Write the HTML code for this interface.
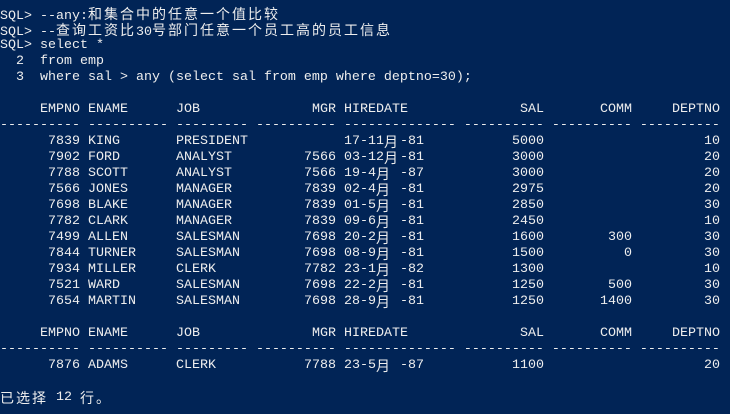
<!DOCTYPE html>
<html><head><meta charset="utf-8"><style>
html,body{margin:0;padding:0}
body{width:730px;height:414px;overflow:hidden;background:#012456;color:#eeeeee;font-family:"Liberation Mono","DejaVu Sans Mono","Courier New",monospace;font-size:13.33px;position:relative}
.l{position:absolute;left:0;height:16px;line-height:16px;white-space:pre}
.l span{position:absolute;top:0;white-space:pre;height:16px;line-height:16px}
.e{left:0;width:80px;text-align:right}
.n{left:88px}.j{left:176px}
.m{left:256px;width:80px;text-align:right}
.h{left:344px}
.s{left:464px;width:80px;text-align:right}
.c{left:552px;width:80px;text-align:right}
.d{left:640px;width:80px;text-align:right}
.k,i{font-style:normal;font-family:"Noto Sans CJK SC",sans-serif;font-size:14px;letter-spacing:2px}
.a{left:344px}.b{left:376px}.r{left:392px}
.a2{left:344px}.b2{left:384px}.r2{left:400px}
</style></head><body>
<div class="l" style="top:6px">SQL&gt; --any:<i>和集合中的任意一个值比较</i></div>
<div class="l" style="top:22px">SQL&gt; --<i>查询工资比</i>30<i>号部门任意一个员工高的员工信息</i></div>
<div class="l" style="top:38px">SQL&gt; select *</div>
<div class="l" style="top:54px">  2  from emp</div>
<div class="l" style="top:70px">  3  where sal &gt; any (select sal from emp where deptno=30);</div>

<div class="l" style="top:102px;width:730px"><span class="e">EMPNO</span><span class="n">ENAME</span><span class="j">JOB</span><span class="m">MGR</span><span class="h">HIREDATE</span><span class="s">SAL</span><span class="c">COMM</span><span class="d">DEPTNO</span></div>
<div class="l" style="top:118px">---------- ---------- --------- ---------- -------------- ---------- ---------- ----------</div>

<div class="l" style="top:134px;width:730px"><span class="e">7839</span><span class="n">KING</span><span class="j">PRESIDENT</span><span class="a2">17-11</span><span class="b2 k">月</span><span class="r2">-81</span><span class="s">5000</span><span class="d">10</span></div>
<div class="l" style="top:150px;width:730px"><span class="e">7902</span><span class="n">FORD</span><span class="j">ANALYST</span><span class="m">7566</span><span class="a2">03-12</span><span class="b2 k">月</span><span class="r2">-81</span><span class="s">3000</span><span class="d">20</span></div>
<div class="l" style="top:166px;width:730px"><span class="e">7788</span><span class="n">SCOTT</span><span class="j">ANALYST</span><span class="m">7566</span><span class="a">19-4</span><span class="b k">月</span><span class="r"> -87</span><span class="s">3000</span><span class="d">20</span></div>
<div class="l" style="top:182px;width:730px"><span class="e">7566</span><span class="n">JONES</span><span class="j">MANAGER</span><span class="m">7839</span><span class="a">02-4</span><span class="b k">月</span><span class="r"> -81</span><span class="s">2975</span><span class="d">20</span></div>
<div class="l" style="top:198px;width:730px"><span class="e">7698</span><span class="n">BLAKE</span><span class="j">MANAGER</span><span class="m">7839</span><span class="a">01-5</span><span class="b k">月</span><span class="r"> -81</span><span class="s">2850</span><span class="d">30</span></div>
<div class="l" style="top:214px;width:730px"><span class="e">7782</span><span class="n">CLARK</span><span class="j">MANAGER</span><span class="m">7839</span><span class="a">09-6</span><span class="b k">月</span><span class="r"> -81</span><span class="s">2450</span><span class="d">10</span></div>
<div class="l" style="top:230px;width:730px"><span class="e">7499</span><span class="n">ALLEN</span><span class="j">SALESMAN</span><span class="m">7698</span><span class="a">20-2</span><span class="b k">月</span><span class="r"> -81</span><span class="s">1600</span><span class="c">300</span><span class="d">30</span></div>
<div class="l" style="top:246px;width:730px"><span class="e">7844</span><span class="n">TURNER</span><span class="j">SALESMAN</span><span class="m">7698</span><span class="a">08-9</span><span class="b k">月</span><span class="r"> -81</span><span class="s">1500</span><span class="c">0</span><span class="d">30</span></div>
<div class="l" style="top:262px;width:730px"><span class="e">7934</span><span class="n">MILLER</span><span class="j">CLERK</span><span class="m">7782</span><span class="a">23-1</span><span class="b k">月</span><span class="r"> -82</span><span class="s">1300</span><span class="d">10</span></div>
<div class="l" style="top:278px;width:730px"><span class="e">7521</span><span class="n">WARD</span><span class="j">SALESMAN</span><span class="m">7698</span><span class="a">22-2</span><span class="b k">月</span><span class="r"> -81</span><span class="s">1250</span><span class="c">500</span><span class="d">30</span></div>
<div class="l" style="top:294px;width:730px"><span class="e">7654</span><span class="n">MARTIN</span><span class="j">SALESMAN</span><span class="m">7698</span><span class="a">28-9</span><span class="b k">月</span><span class="r"> -81</span><span class="s">1250</span><span class="c">1400</span><span class="d">30</span></div>

<div class="l" style="top:326px;width:730px"><span class="e">EMPNO</span><span class="n">ENAME</span><span class="j">JOB</span><span class="m">MGR</span><span class="h">HIREDATE</span><span class="s">SAL</span><span class="c">COMM</span><span class="d">DEPTNO</span></div>
<div class="l" style="top:342px">---------- ---------- --------- ---------- -------------- ---------- ---------- ----------</div>
<div class="l" style="top:358px;width:730px"><span class="e">7876</span><span class="n">ADAMS</span><span class="j">CLERK</span><span class="m">7788</span><span class="a">23-5</span><span class="b k">月</span><span class="r"> -87</span><span class="s">1100</span><span class="d">20</span></div>

<div class="l" style="top:390px;width:730px"><span class="k" style="left:0">已选择</span><span style="left:48px"> 12 </span><span class="k" style="left:80px">行。</span></div>
</body></html>
